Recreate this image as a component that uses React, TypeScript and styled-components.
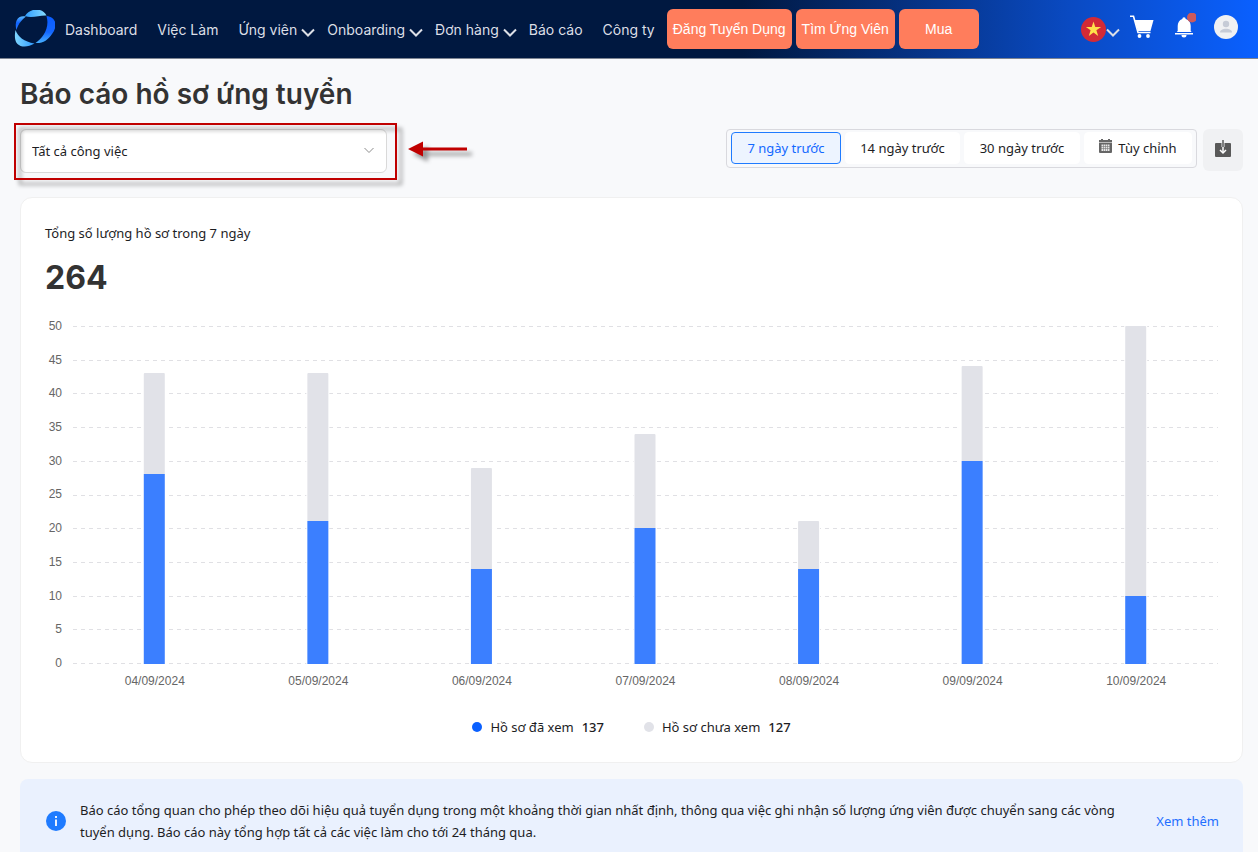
import React from "react";
import styled, { createGlobalStyle, css } from "styled-components";

const GlobalStyle = createGlobalStyle`
  *, *::before, *::after { box-sizing: border-box; }
  body {
    margin: 0;
    background: #f8f9fb;
    color: #1d1d1f;
    font-family: "Noto Sans", "Open Sans", sans-serif;
    font-size: 13px;
    line-height: 22px;
  }
  button, select { font: inherit; color: inherit; }
  a { text-decoration: none; }
`;

const Header = styled.header`
  display: flex;
  align-items: center;
  height: 59px;
  padding: 0 20px 0 14px;
  border-bottom: 1px solid #7d8492;
  background: linear-gradient(90deg, #001840 0%, #001840 59%, #0a4ac2 85%, #0a60ff 100%);
  font-family: Inter, sans-serif;
  font-size: 14px;
`;

const Nav = styled.nav`
  display: flex;
  align-items: center;
  gap: 20px;
  margin-left: 10px;
  padding-top: 2px;
`;

const NavLink = styled.a<{ $menu?: boolean }>`
  display: flex;
  align-items: center;
  gap: 4px;
  color: #dcdfe6;
  white-space: nowrap;
  margin-right: ${(p) => (p.$menu ? "-8px" : "0")};
  svg { margin-top: 5px; }
`;

const Actions = styled.div`
  display: flex;
  gap: 4px;
  margin-left: 12px;
`;

const ActionButton = styled.button<{ $width: number }>`
  width: ${(p) => p.$width}px;
  height: 40px;
  padding: 0;
  border: 0;
  border-radius: 6px;
  background: #ff7d5c;
  color: #fff;
  font-family: "Liberation Sans", sans-serif;
  white-space: nowrap;
`;

const Tools = styled.div`
  display: flex;
  align-items: center;
  gap: 18px;
  margin-left: auto;
  padding-bottom: 4px;
`;

const ToolButton = styled.button`
  display: flex;
  align-items: center;
  padding: 0;
  border: 0;
  background: none;
  color: #dcdfe6;
`;

const LanguageButton = styled(ToolButton)`
  margin: 4px -8px 0 0;
  svg + svg { margin-top: 7px; }
`;

const Main = styled.main`
  padding: 15px 15px 0 20px;
`;

const Title = styled.h1`
  margin: 0;
  color: #333;
  font-family: Inter, sans-serif;
  font-size: 28px;
  font-weight: 600;
  line-height: 40px;
`;

const FilterBar = styled.div`
  display: flex;
  justify-content: space-between;
  align-items: flex-start;
  margin-top: 15px;
`;

const JobField = styled.div`
  position: relative;
  width: 367px;
`;

const JobSelect = styled.select`
  display: block;
  width: 100%;
  height: 44px;
  padding: 0 11px;
  border: 1px solid #d9d9d9;
  border-radius: 6px;
  background: #fff;
  appearance: none;
`;

const FieldChevron = styled.svg`
  position: absolute;
  top: 18px;
  right: 13px;
  pointer-events: none;
`;

const Highlight = styled.div`
  position: absolute;
  inset: -6px -10px -7px -6px;
  border: 2px solid #c00000;
  filter: drop-shadow(5px 5px 2px rgba(0, 0, 0, 0.4));
  pointer-events: none;
`;

const PointerArrow = styled.svg`
  position: absolute;
  top: 9px;
  left: 387px;
  overflow: visible;
  filter: drop-shadow(5px 5px 2px rgba(0, 0, 0, 0.4));
`;

const Period = styled.div`
  display: flex;
  gap: 6px;
`;

const Segments = styled.div`
  display: flex;
  align-items: flex-start;
  gap: 4px;
  height: 39px;
  padding: 2px 4px;
  border: 1px solid #d9d9de;
  border-radius: 4px;
`;

const Segment = styled.button<{ $active?: boolean; $width: number }>`
  display: flex;
  align-items: center;
  justify-content: center;
  gap: 6px;
  width: ${(p) => p.$width}px;
  height: 32px;
  padding: 0;
  border: 1px solid #fff;
  border-radius: 4px;
  background: #fff;
  white-space: nowrap;
  svg { margin-bottom: 4px; }
  ${(p) =>
    p.$active &&
    css`
      border-color: #1f7bff;
      background: #edf4ff;
      color: #1268ff;
    `}
`;

const Download = styled.button`
  display: flex;
  align-items: center;
  justify-content: center;
  width: 40px;
  height: 42px;
  padding: 0 0 2px;
  border: 0;
  border-radius: 6px;
  background: #f0f1f3;
`;

const Card = styled.section`
  margin-top: 24px;
  padding: 24px 24px 23px;
  border: 1px solid #f0f0f0;
  border-radius: 12px;
  background: #fff;
`;

const CardLabel = styled.h2`
  margin: 0;
  font-size: 13px;
  font-weight: 400;
  line-height: 22px;
`;

const Total = styled.div`
  margin-top: 14px;
  color: #333;
  font-family: Inter, sans-serif;
  font-size: 32px;
  font-weight: 700;
  line-height: 40px;
`;

const Chart = styled.div`
  display: grid;
  grid-template-columns: 17px 1fr;
  column-gap: 11px;
  margin-top: 18px;
  color: #666;
  font-family: "Liberation Sans", sans-serif;
  font-size: 12px;
  line-height: 20px;
`;

const YAxis = styled.div`
  display: flex;
  flex-direction: column;
  justify-content: space-between;
  height: 357px;
  text-align: right;
`;

const Plot = styled.svg`
  width: 100%;
  height: 338px;
  margin-top: 10px;
`;

const XAxis = styled.div`
  grid-column: 2;
  display: grid;
  grid-template-columns: repeat(7, 1fr);
  margin-top: -2px;
  text-align: center;
`;

const Legend = styled.div`
  display: flex;
  justify-content: center;
  gap: 40px;
  margin-top: 24px;
  line-height: 24px;
`;

const LegendItem = styled.div`
  display: flex;
  align-items: center;
  gap: 8px;
  strong { font-weight: 500; }
`;

const Dot = styled.span<{ $color: string }>`
  width: 10px;
  height: 10px;
  border-radius: 50%;
  background: ${(p) => p.$color};
`;

const Notice = styled.aside`
  display: flex;
  align-items: center;
  gap: 13px;
  margin-top: 16px;
  padding: 20px 24px 20px 25px;
  border-radius: 8px;
  background: #eaf1fe;
  p { flex: 1; margin: 0; }
  a { color: #1f6fff; white-space: nowrap; margin-left: 8px; }
`;

const MenuChevron = () => (
  <svg width="14" height="10" viewBox="0 0 14 10" fill="none" stroke="currentColor" strokeWidth="2" aria-hidden="true">
    <path d="M1 1.5l6 6 6-6" />
  </svg>
);

const Logo = () => (
  <svg width="41" height="38" viewBox="0 0 41 38" aria-label="Logo" role="img">
    <defs>
      <linearGradient id="top" x1="0" x2="1">
        <stop offset="0" stopColor="#2f9dff" />
        <stop offset="1" stopColor="#86dcff" />
      </linearGradient>
      <linearGradient id="low" x1="0" x2="1">
        <stop offset="0" stopColor="#7ed6ff" />
        <stop offset="1" stopColor="#2f9bff" />
      </linearGradient>
      <linearGradient id="side" x1="0" x2="0" y1="0" y2="1">
        <stop offset="0" stopColor="#0a5cff" />
        <stop offset="0.6" stopColor="#1467ff" />
        <stop offset="1" stopColor="#48b1ff" />
      </linearGradient>
      <linearGradient id="left" x1="0" x2="0" y1="0" y2="1">
        <stop offset="0" stopColor="#5cbcff" />
        <stop offset="0.5" stopColor="#0f62ff" />
        <stop offset="1" stopColor="#2a7dff" />
      </linearGradient>
    </defs>
    <path d="M11 6C15-1.500 28-3.500 32.500 5.500C26 5 18 8.500 11 6Z" fill="url(#top)" />
    <path d="M32.500 6C43 7 43.500 17 38 24C34 30 29 33.500 21.500 33C29 28 36 18 32.500 6Z" fill="url(#side)" />
    <path d="M1.500 20C4 27 10 31.500 20.500 33.500C14 37.500 7 37.500 3.500 34C0.500 31 0.500 25 1.500 20Z" fill="url(#low)" />
    <path d="M2.500 20C0 11 4 4.500 12 6.500C8 10 4.500 13 2.500 20Z" fill="url(#left)" />
  </svg>
);

const navItems = [
  { label: "Dashboard" },
  { label: "Việc Làm" },
  { label: "Ứng viên", menu: true },
  { label: "Onboarding", menu: true },
  { label: "Đơn hàng", menu: true },
  { label: "Báo cáo" },
  { label: "Công ty" },
];

const days = [
  { date: "04/09/2024", seen: 28, total: 43 },
  { date: "05/09/2024", seen: 21, total: 43 },
  { date: "06/09/2024", seen: 14, total: 29 },
  { date: "07/09/2024", seen: 20, total: 34 },
  { date: "08/09/2024", seen: 14, total: 21 },
  { date: "09/09/2024", seen: 30, total: 44 },
  { date: "10/09/2024", seen: 10, total: 50 },
];

const ticks = [50, 45, 40, 35, 30, 25, 20, 15, 10, 5, 0];
const PLOT_HEIGHT = 337;
const yOf = (value: number) => Math.round(PLOT_HEIGHT * (1 - value / 50));

const BarChart = () => (
  <Chart>
    <YAxis>
      {ticks.map((t) => (
        <span key={t}>{t}</span>
      ))}
    </YAxis>
    <Plot aria-label="Số lượng hồ sơ theo ngày" role="img">
      {ticks.map((t) => (
        <line key={t} x1="0" x2="100%" y1={yOf(t) + 0.5} y2={yOf(t) + 0.5} stroke="#e0e0e4" strokeDasharray="4 4" />
      ))}
      {days.map((d, i) => (
        <svg key={d.date} x={`${((i + 0.5) * 100) / days.length}%`} overflow="visible">
          <rect x="-12" y={yOf(d.total)} width="23" height={yOf(0) - yOf(d.total) + 1} fill="#fff" />
          <path d={`M-11 ${yOf(d.seen)}V${yOf(d.total) + 1}q0-1 1-1h19q1 0 1 1V${yOf(d.seen)}z`} fill="#e1e2e8" />
          <rect x="-11" y={yOf(d.seen)} width="21" height={yOf(0) - yOf(d.seen) + 1} fill="#3b7fff" />
        </svg>
      ))}
    </Plot>
    <XAxis>
      {days.map((d) => (
        <span key={d.date}>{d.date}</span>
      ))}
    </XAxis>
  </Chart>
);

export default function App() {
  return (
    <>
      <GlobalStyle />
      <Header>
        <Logo />
        <Nav>
          {navItems.map((item) => (
            <NavLink key={item.label} href="#" $menu={item.menu}>
              {item.label}
              {item.menu && <MenuChevron />}
            </NavLink>
          ))}
        </Nav>
        <Actions>
          <ActionButton $width={125}>Đăng Tuyển Dụng</ActionButton>
          <ActionButton $width={99}>Tìm Ứng Viên</ActionButton>
          <ActionButton $width={80}>Mua</ActionButton>
        </Actions>
        <Tools>
          <LanguageButton aria-label="Ngôn ngữ">
            <svg width="25" height="25" viewBox="0 0 25 25">
              <circle cx="12.500" cy="12.500" r="12.500" fill="#d32a36" />
              <path d="M12.500 4.500l1.800 5.400h5.800l-4.700 3.400 1.800 5.600-4.700-3.400-4.700 3.400 1.800-5.600L4.900 9.900h5.800z" fill="#ffe14a" />
            </svg>
            <MenuChevron />
          </LanguageButton>
          <ToolButton aria-label="Giỏ hàng">
            <svg width="24" height="24" viewBox="0 0 24 24" fill="#fff">
              <path d="M4.500 5H23.500L20.500 16H8z" />
              <path d="M0 1.200h3.500L8 17.500h12.500" fill="none" stroke="#fff" strokeWidth="1.600" />
              <circle cx="9.500" cy="21" r="1.900" />
              <circle cx="18" cy="21" r="1.900" />
            </svg>
          </ToolButton>
          <ToolButton aria-label="Thông báo">
            <svg width="24" height="28" viewBox="0 0 24 28">
              <g fill="#fff">
                <path d="M10.300 6a1.700 1.700 0 0 1 3.400 0c3.500 1 5 4 5 7v5l1 1h-15l1-1v-5c0-3 1.500-6 4.600-7z" />
                <path d="M3 20h18v1.600H3zM9.500 22h5a2.500 2.500 0 0 1-5 0z" />
              </g>
              <circle cx="20" cy="4.500" r="5" fill="#cb5a5c" />
            </svg>
          </ToolButton>
          <ToolButton aria-label="Tài khoản">
            <svg width="24" height="24" viewBox="0 0 24 24">
              <circle cx="12" cy="12" r="12" fill="#f0f1f3" />
              <g fill="#c6cbd6">
                <circle cx="12" cy="9" r="3.200" />
                <path d="M6 17.500c0-5 12-5 12 0z" />
              </g>
            </svg>
          </ToolButton>
        </Tools>
      </Header>
      <Main>
        <Title>Báo cáo hồ sơ ứng tuyển</Title>
        <FilterBar>
          <JobField>
            <JobSelect aria-label="Công việc">
              <option>Tất cả công việc</option>
            </JobSelect>
            <FieldChevron width="10" height="7" viewBox="0 0 10 7" fill="none" stroke="#8c8c8c" aria-hidden="true">
              <path d="M.5 1L5 5.500 9.500 1" />
            </FieldChevron>
            <Highlight />
            <PointerArrow width="60" height="22" viewBox="0 0 60 22" fill="#c00000" aria-hidden="true">
              <path d="M1 11L16 3.500V9.500H60v3H16v6z" />
            </PointerArrow>
          </JobField>
          <Period>
            <Segments>
              <Segment $active $width={110}>7 ngày trước</Segment>
              <Segment $width={115}>14 ngày trước</Segment>
              <Segment $width={116}>30 ngày trước</Segment>
              <Segment $width={108}>
                <svg width="13" height="14" viewBox="0 0 13 14" aria-hidden="true">
                  <path d="M0 1h2V0h2v1h5V0h2v1h2v12q0 1-1 1H1q-1 0-1-1z" fill="#666" />
                  <path d="M0 3.500h13" stroke="#bbb" />
                  <path d="M2.500 5.500h8v6.500h-8z" fill="#e8e8e8" />
                  <path d="M4.500 5v7M6.500 5v7M8.500 5v7M2 7.500h9M2 9.500h9" stroke="#777" strokeWidth="0.600" />
                </svg>
                Tùy chỉnh
              </Segment>
            </Segments>
            <Download aria-label="Tải xuống">
              <svg width="16" height="18" viewBox="0 0 16 18" aria-hidden="true">
                <path d="M1 3h5.500v4h3V3H15q1 0 1 1v12q0 1-1 1H1q-1 0-1-1V4q0-1 1-1z" fill="#595959" />
                <path d="M8 0v7" stroke="#595959" strokeWidth="1.500" />
                <path d="M8 7v6" stroke="#fff" strokeWidth="1.500" />
                <path d="M5 10l3 3 3-3" fill="none" stroke="#fff" strokeWidth="1.500" />
              </svg>
            </Download>
          </Period>
        </FilterBar>
        <Card>
          <CardLabel>Tổng số lượng hồ sơ trong 7 ngày</CardLabel>
          <Total>264</Total>
          <BarChart />
          <Legend>
            <LegendItem>
              <Dot $color="#0a60ff" />
              Hồ sơ đã xem <strong>137</strong>
            </LegendItem>
            <LegendItem>
              <Dot $color="#e1e2e8" />
              Hồ sơ chưa xem <strong>127</strong>
            </LegendItem>
          </Legend>
        </Card>
        <Notice>
          <svg width="22" height="22" viewBox="0 0 22 22" aria-hidden="true">
            <circle cx="11" cy="11" r="10" fill="#1f7bff" />
            <path d="M10 6h2v2h-2zM10 9.500h2V16h-2z" fill="#eaf1fe" />
          </svg>
          <p>
            Báo cáo tổng quan cho phép theo dõi hiệu quả tuyển dụng trong một khoảng thời gian nhất định, thông qua việc
            ghi nhận số lượng ứng viên được chuyển sang các vòng tuyển dụng. Báo cáo này tổng hợp tất cả các việc làm
            cho tới 24 tháng qua.
          </p>
          <a href="#">Xem thêm</a>
        </Notice>
      </Main>
    </>
  );
}
